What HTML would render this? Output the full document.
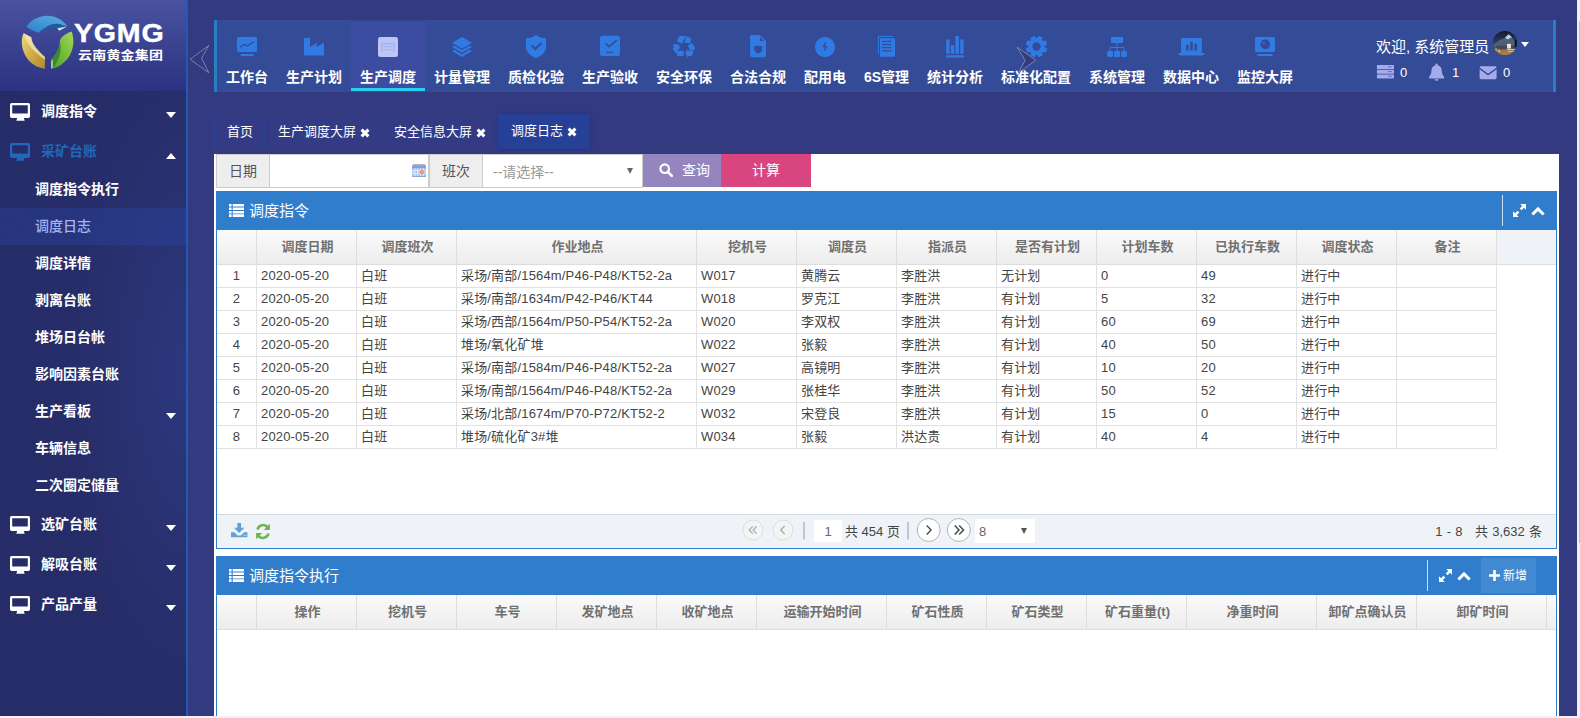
<!DOCTYPE html>
<html lang="zh-CN">
<head>
<meta charset="utf-8">
<title>调度日志</title>
<style>
*{box-sizing:border-box;margin:0;padding:0}
html,body{width:1580px;height:718px;overflow:hidden}
body{position:relative;background:#343a80;font-family:"Liberation Sans","Noto Sans CJK SC",sans-serif;font-size:13px;color:#444}
.abs{position:absolute}
svg{display:block}
/* fake browser scrollbars (cut off at the edge of the capture) */
#vsb{left:1577px;top:0;width:3px;height:718px;background:#f1f1f1}
#vsb i{position:absolute;left:2px;top:21px;width:1px;height:522px;background:#c1c1c1}
#hsb{left:0;top:716px;width:1580px;height:2px;background:#f1f1f1}
/* sidebar */
#side{left:0;top:0;width:188px;height:716px;background:radial-gradient(ellipse 120px 330px at 100% 52%,rgba(58,80,175,.30),rgba(58,80,175,0) 100%),repeating-linear-gradient(118deg,rgba(255,255,255,0) 0 5px,rgba(120,140,220,.025) 5px 6px),#262c67;border-right:2px solid #1f5bb0;overflow:hidden}
#logo{left:0;top:0;width:186px;height:91px;background:linear-gradient(#4a53a1,#2b3381)}
#ygmg{left:74px;top:18px;font:bold 26px/30px "Liberation Sans",sans-serif;color:#fff;letter-spacing:.7px;white-space:nowrap;-webkit-text-stroke:.4px #fff;transform:scaleX(1.1);transform-origin:0 0}
#ygcn{left:78px;top:46.400px;font:bold 14px/20px "Liberation Sans","Noto Sans CJK SC",sans-serif;color:#fff;letter-spacing:.2px;white-space:nowrap;transform:scaleY(.88);transform-origin:0 50%}
.m1{left:0;width:186px;height:40px;color:#fff;font-weight:bold;font-size:14px;line-height:40px}
.m1 span{position:absolute;left:41px;top:0;white-space:nowrap}
.m1 svg.mon{position:absolute;left:10px;top:12px}
.m1 b{position:absolute;left:166px;width:0;height:0;border-left:5px solid transparent;border-right:5px solid transparent}
.m1 b.dn{top:21px;border-top:6px solid #fff}
.m1 b.up{top:22px;border-bottom:6px solid #fff}
.m1.act{color:#1f68bb}
.m2{left:0;width:186px;height:37px;color:#fff;font-weight:bold;font-size:14px;line-height:37px}
.m2 span{position:absolute;left:35px;top:0;white-space:nowrap}
.m2 b{position:absolute;left:166px;top:20px;width:0;height:0;border-left:5px solid transparent;border-right:5px solid transparent;border-top:6px solid #fff}
.m2.act{background:rgba(40,82,200,.24);color:#a9b3ee;font-weight:500}
/* top nav */
#nav{left:214px;top:20px;width:1342px;height:72px;background:#344b97;border-left:3px solid #2a7fc2;border-right:3px solid #2a7fc2}
.ni{top:20px;height:72px;color:#fff;font-weight:bold;font-size:14px;text-align:center}
.ni span{position:absolute;left:0;right:0;top:46px;line-height:22px;white-space:nowrap}
.ni svg{position:absolute}
.ni.act{top:22px;height:69px;background:#3c4ca0;border-bottom:3px solid #25d0ee}
.ni.act span{top:44px}
/* user box */
#uname{left:1376px;top:36px;font-size:15px;line-height:22px;color:#fff;white-space:nowrap}
#avatar{left:1493px;top:31px;width:24px;height:24px;border-radius:50%;overflow:hidden;background:#2a3550}
#ucaret{left:1521px;top:42px;width:0;height:0;border-left:4px solid transparent;border-right:4px solid transparent;border-top:5px solid #fff}
.ucnt{top:64px;font-size:13px;line-height:18px;color:#fff}
/* page tabs */
.tab{top:115px;height:35px;border:1px solid #2b4193;border-left:0;background:#333b84;color:#fff;font-size:13px;line-height:31px;white-space:nowrap}
.tab span{position:absolute;top:0}
.tab svg{position:absolute}
.tab.act{top:114px;height:35px;background:#254096;border-color:#254096;box-shadow:0 0 5px rgba(0,0,20,.2)}
/* content */
#content{left:214px;top:154px;width:1345px;height:562px;background:#fff}
.lbl{top:154px;height:34px;background:#eee;border:1px solid #ccc;font-size:14px;line-height:32px;color:#555;text-align:center}
.inp{top:154px;height:34px;background:#fff;border:1px solid #ccc;border-left:0}
.btn{top:154px;height:33px;color:#fff;font-size:14px;line-height:32px}
/* panels */
.ph{left:216px;width:1341px;height:39px;background:#307dcc;color:#fff}
.ph .t{position:absolute;left:33px;top:0;font-size:15px;line-height:40px;white-space:nowrap}
.ph svg{position:absolute}
.ph .sep{position:absolute;top:4px;width:1px;height:31px;background:rgba(255,255,255,.75)}
.pb{left:216px;width:1341px;border:1px solid #307dcc;border-top:0;background:#fff;overflow:hidden}
.hr{position:absolute;left:0;top:0;height:35px;width:1339px;background:#eff3f8;border-bottom:1px solid #ddd}
.th{position:absolute;top:0;height:34px;border-right:1px solid #dedede;background:linear-gradient(#fafafa,#ededed);color:#707070;font-weight:bold;font-size:13px;line-height:33px;text-align:center;white-space:nowrap;overflow:hidden;padding-left:2px}
.td{position:absolute;height:23px;border-right:1px solid #e1e1e1;border-bottom:1px solid #e1e1e1;font-size:13px;line-height:21px;color:#444;padding-left:4px;white-space:nowrap;overflow:hidden;letter-spacing:.17px}
.td.n{text-align:center;padding-left:0}
#pager{position:absolute;left:0;top:284px;width:1339px;height:34px;background:#eff3f8;border-top:1px solid #d3dbe5}
</style>
</head>
<body>
<div id="side" class="abs">
  <div id="logo" class="abs">
    <svg class="abs" style="left:0;top:0" width="186" height="91" viewBox="0 0 186 91">
      <defs>
        <linearGradient id="lgB" x1="0" y1="1" x2="1" y2="0"><stop offset="0" stop-color="#2a7fc8"/><stop offset=".6" stop-color="#4a9bd9"/><stop offset="1" stop-color="#5aa8df"/></linearGradient>
        <linearGradient id="lgY" x1="0" y1="0" x2="1" y2="1"><stop offset="0" stop-color="#ecd98a"/><stop offset=".5" stop-color="#cfae4a"/><stop offset="1" stop-color="#b08a2c"/></linearGradient>
        <linearGradient id="lgG" x1="1" y1="0" x2="0" y2="1"><stop offset="0" stop-color="#a6d85e"/><stop offset=".55" stop-color="#72b83a"/><stop offset="1" stop-color="#4f9e30"/></linearGradient>
      </defs>
      <g id="mark"><g transform="translate(15 10) scale(.09057)">
<path d="M125 185C170 110 270 62 360 63C450 64 530 110 578 180L520 168C470 140 400 150 340 195C310 215 285 235 265 250C215 240 165 215 125 185Z" fill="url(#lgB)"/>
<path d="M265 250C300 215 360 165 440 155C480 150 510 158 530 170L578 180L485 228C450 195 380 175 265 250Z" fill="#1d5c9c"/>
<path d="M468 202L575 182L488 229Z" fill="#d3e3f0"/>
<path d="M95 258C60 330 70 440 130 530C180 600 260 640 330 648L330 520C290 480 230 430 200 380C185 350 180 320 180 300Z" fill="url(#lgY)"/>
<path d="M95 258L180 300C185 350 215 410 330 520L330 548C240 480 130 400 95 258Z" fill="#f5e9ae" opacity=".75"/>
<path d="M625 238C660 330 650 440 590 525C540 595 470 640 400 648L400 545C450 500 490 430 495 350C497 310 540 270 625 238Z" fill="url(#lgG)"/>
<path d="M400 648L400 545C450 500 490 430 495 350C512 400 506 480 470 560C450 605 425 635 400 648Z" fill="#3d8a2e"/>
<path d="M400 560L416 546L416 638L400 648Z" fill="#d2e8bd" opacity=".9"/>
</g>
</g>
    </svg>
    <div id="ygmg" class="abs">YGMG</div>
    <div id="ygcn" class="abs">云南黄金集团</div>
  </div>
  <div class="abs m1" style="top:91px"><svg class="mon" width="20" height="18" viewBox="0 0 20 18"><path fill="#fff" fill-rule="evenodd" d="M1.6 0h16.800a1.600 1.600 0 0 1 1.600 1.600v11.700a1.600 1.600 0 0 1-1.600 1.600h-4.600l.9 2.800H6.300l.9-2.800H1.600A1.600 1.600 0 0 1 0 13.300V1.600A1.600 1.600 0 0 1 1.600 0zM2.200 2.300v8.200h15.600V2.300z"/></svg><span>调度指令</span><b class="dn"></b></div>
  <div class="abs m1 act" style="top:131px"><svg class="mon" width="20" height="18" viewBox="0 0 20 18"><path fill="#1f68bb" fill-rule="evenodd" d="M1.6 0h16.800a1.600 1.600 0 0 1 1.600 1.600v11.700a1.600 1.600 0 0 1-1.600 1.600h-4.600l.9 2.800H6.300l.9-2.800H1.600A1.600 1.600 0 0 1 0 13.300V1.600A1.600 1.600 0 0 1 1.600 0zM2.200 2.300v8.200h15.600V2.300z"/></svg><span>采矿台账</span><b class="up"></b></div>
  <div class="abs m2" style="top:171px"><span>调度指令执行</span></div>
  <div class="abs m2 act" style="top:208px"><span>调度日志</span></div>
  <div class="abs m2" style="top:245px"><span>调度详情</span></div>
  <div class="abs m2" style="top:282px"><span>剥离台账</span></div>
  <div class="abs m2" style="top:319px"><span>堆场日台帐</span></div>
  <div class="abs m2" style="top:356px"><span>影响因素台账</span></div>
  <div class="abs m2" style="top:393px"><span>生产看板</span><b></b></div>
  <div class="abs m2" style="top:430px"><span>车辆信息</span></div>
  <div class="abs m2" style="top:467px"><span>二次圈定储量</span></div>
  <div class="abs m1" style="top:504px"><svg class="mon" width="20" height="18" viewBox="0 0 20 18"><path fill="#fff" fill-rule="evenodd" d="M1.6 0h16.800a1.600 1.600 0 0 1 1.600 1.600v11.700a1.600 1.600 0 0 1-1.600 1.600h-4.600l.9 2.800H6.300l.9-2.800H1.600A1.600 1.600 0 0 1 0 13.300V1.600A1.600 1.600 0 0 1 1.600 0zM2.200 2.300v8.200h15.600V2.300z"/></svg><span>选矿台账</span><b class="dn"></b></div>
  <div class="abs m1" style="top:544px"><svg class="mon" width="20" height="18" viewBox="0 0 20 18"><path fill="#fff" fill-rule="evenodd" d="M1.6 0h16.800a1.600 1.600 0 0 1 1.600 1.600v11.700a1.600 1.600 0 0 1-1.600 1.600h-4.600l.9 2.800H6.300l.9-2.800H1.600A1.600 1.600 0 0 1 0 13.300V1.600A1.600 1.600 0 0 1 1.600 0zM2.200 2.300v8.200h15.600V2.300z"/></svg><span>解吸台账</span><b class="dn"></b></div>
  <div class="abs m1" style="top:584px"><svg class="mon" width="20" height="18" viewBox="0 0 20 18"><path fill="#fff" fill-rule="evenodd" d="M1.6 0h16.800a1.600 1.600 0 0 1 1.600 1.600v11.700a1.600 1.600 0 0 1-1.600 1.600h-4.600l.9 2.800H6.300l.9-2.800H1.600A1.600 1.600 0 0 1 0 13.300V1.600A1.600 1.600 0 0 1 1.600 0zM2.200 2.300v8.200h15.600V2.300z"/></svg><span>产品产量</span><b class="dn"></b></div>
</div>
<svg class="abs" style="left:188px;top:40px" width="24" height="40" viewBox="188 40 24 40"><path d="M190.300 59.400L208.800 45.300L201.600 58.200L208.800 72.800Z" fill="none" stroke="#8c91b4" stroke-width="1" stroke-dasharray="2.200 .5"/></svg>
<div id="nav" class="abs"></div>
<div class="abs ni" style="left:217px;width:60px"><span>工作台</span></div>
<div class="abs ni" style="left:277px;width:74px"><span>生产计划</span></div>
<div class="abs ni act" style="left:351px;width:74px"><span>生产调度</span></div>
<div class="abs ni" style="left:425px;width:74px"><span>计量管理</span></div>
<div class="abs ni" style="left:499px;width:74px"><span>质检化验</span></div>
<div class="abs ni" style="left:573px;width:74px"><span>生产验收</span></div>
<div class="abs ni" style="left:647px;width:74px"><span>安全环保</span></div>
<div class="abs ni" style="left:721px;width:74px"><span>合法合规</span></div>
<div class="abs ni" style="left:795px;width:60px"><span>配用电</span></div>
<div class="abs ni" style="left:855px;width:63px"><span>6S管理</span></div>
<div class="abs ni" style="left:918px;width:74px"><span>统计分析</span></div>
<div class="abs ni" style="left:992px;width:88px"><span>标准化配置</span></div>
<div class="abs ni" style="left:1080px;width:74px"><span>系统管理</span></div>
<div class="abs ni" style="left:1154px;width:74px"><span>数据中心</span></div>
<div class="abs ni" style="left:1228px;width:74px"><span>监控大屏</span></div>
<svg id="navicons" class="abs" style="left:0;top:0;pointer-events:none" width="1580" height="100" viewBox="0 0 1580 100" fill="#307be3">
<!-- right scroll arrow (sits over the gear icon) -->
<path d="M1017.200 47.200L1035.800 60.200L1018.600 72.400L1025.200 60.400Z" fill="#343a80" stroke="#8c91b4" stroke-width=".8"/>
<!-- 1 workbench: monitor + chart -->
<rect x="237" y="37" width="20" height="15" rx="1.600"/>
<rect x="240.600" y="54" width="12.800" height="2" rx=".6"/>
<path d="M240.200 47.300L243.900 44.500L247.200 45.800L253.700 42" fill="none" stroke="#344b97" stroke-width="1.400" stroke-linecap="round" stroke-linejoin="round"/>
<!-- 2 factory -->
<path d="M304.600 37.900h4.800a.6 .6 0 0 1 .6 .6v8.600l6.800-4.300v4.300l6.800-4.300a.3 .3 0 0 1 .4 .3v11.700a.6 .6 0 0 1-.6 .6h-18.800a.6 .6 0 0 1-.6-.6v-16.300a.6 .6 0 0 1 .6-.6z"/>
<!-- 3 dispatch (active) -->
<rect x="378" y="37" width="20" height="20" rx="2.200" fill="#bcc5f6"/>
<g fill="none" stroke="#a3adf0" stroke-width="1.100" stroke-linecap="round">
<path d="M384 43.600h8M384 46.700h8M384 49.800h8"/>
<path d="M382.300 42.200q-1.500 4.600 0 9.200M393.700 42.200q1.500 4.600 0 9.200"/>
</g>
<!-- 4 layers -->
<path d="M462 36.900l10 5.900l-10 5.900l-10-5.900z"/>
<path d="M452 46.900l2.300-1.300l7.700 4.500l7.700-4.500l2.300 1.300l-10 5.900z"/>
<path d="M452 51l2.300-1.300l7.700 4.500l7.700-4.500l2.300 1.300l-10 5.900z"/>
<!-- 5 shield check -->
<path d="M536 34.800c-3 2.600-6.600 3.400-10.100 3.400v8.300c0 6 4.800 9.500 10.100 11.600c5.300-2.100 10.100-5.600 10.100-11.600v-8.300c-3.500 0-7.100-.8-10.100-3.400z"/>
<path d="M531.700 45.500L535.300 49L541.500 42.900" fill="none" stroke="#344b97" stroke-width="2"/>
<!-- 6 check square -->
<rect x="600" y="35.700" width="20" height="20.300" rx="2.600"/>
<path d="M605.300 43.400L609 46.700L616.900 40.200" fill="none" stroke="#344b97" stroke-width="1.700"/>
<path d="M606.200 52.400h6.700" fill="none" stroke="#344b97" stroke-width="1.300"/>
<!-- 7 recycle -->
<g transform="translate(664 30) scale(.04454)">
<path d="M348 133H492L402 312L288 250Z"/>
<path d="M492 150H548L612 190L590 292H455L482 228Z"/>
<path d="M628 292L702 405L668 455H582L535 350Z"/>
<path d="M478 522L522 428L532 465H672L622 582H545L532 622Z"/>
<path d="M305 468H442V585H305L285 528Z"/>
<path d="M203 320H322L362 410L330 422L265 532L200 422L218 380Z"/>
</g>
<!-- 8 file + shield -->
<path d="M751.600 34.900h8.200l6.200 6.200v14.500a1.600 1.600 0 0 1-1.600 1.600h-12.700a1.600 1.600 0 0 1-1.600-1.600v-19.100a1.600 1.600 0 0 1 1.600-1.600z"/>
<path d="M760 37v4h4z" fill="#344b97"/>
<path d="M754.200 46.200q4 .2 4-1.200q0 1.400 4 1.200v2.600q0 3.300-4 4.700q-4-1.400-4-4.700z" fill="#344b97"/>
<!-- 9 bolt circle -->
<circle cx="825" cy="47.100" r="10.100"/>
<path d="M825.400 41.700l-3 5.600h2.500l-1.100 5l3.700-6.300h-2.600l1.500-4.300z" fill="#344b97"/>
<!-- 10 docs -->
<path d="M878.400 54V36.400H893" fill="none" stroke="#307be3" stroke-width="1"/>
<rect x="880" y="38.200" width="15" height="18.600" rx=".5"/>
<path d="M881.900 41.300h9.600M881.900 44.500h9.600M881.900 47.700h9.600M881.900 50.900h9.600" fill="none" stroke="#344b97" stroke-width="1.300"/>
<!-- 11 bars -->
<path d="M946.200 39.600h3.400v14.100h-3.400zM950.900 45h3.300v8.700h-3.300zM955.400 36h3.500v17.700h-3.500zM960.200 39.600h3.400v14.100h-3.400zM946 55.200h18.100v2.400H946z"/>
<!-- 12 gear -->
<g transform="translate(1036.500 46.500) rotate(22.500)">
<rect x="-2.500" y="-10.700" width="5" height="5" rx="1" transform="rotate(0)"/><rect x="-2.500" y="-10.700" width="5" height="5" rx="1" transform="rotate(45)"/><rect x="-2.500" y="-10.700" width="5" height="5" rx="1" transform="rotate(90)"/><rect x="-2.500" y="-10.700" width="5" height="5" rx="1" transform="rotate(135)"/><rect x="-2.500" y="-10.700" width="5" height="5" rx="1" transform="rotate(180)"/><rect x="-2.500" y="-10.700" width="5" height="5" rx="1" transform="rotate(225)"/><rect x="-2.500" y="-10.700" width="5" height="5" rx="1" transform="rotate(270)"/><rect x="-2.500" y="-10.700" width="5" height="5" rx="1" transform="rotate(315)"/>
<circle r="6.300" fill="none" stroke="#307be3" stroke-width="4.200"/>
</g>
<!-- 13 sitemap -->
<rect x="1111" y="37" width="12.200" height="6" rx="1"/>
<path d="M1117 43v4M1110 51v-3.500h14v3.500M1117 47v4" fill="none" stroke="#307be3" stroke-width="1"/>
<rect x="1107" y="51" width="6" height="6" rx="1.200"/><rect x="1114" y="51" width="6" height="6" rx="1.200"/><rect x="1121" y="51" width="6" height="6" rx="1.200"/>
<!-- 14 laptop bars -->
<path d="M1182.200 38h18.500a1.200 1.200 0 0 1 1.200 1.200v13.700h2.700q.4 0 .2 .5q-.5 2-2.400 2h-21.900q-1.900 0-2.400-2q-.2-.5 .2-.5h2.700v-13.700a1.200 1.200 0 0 1 1.200-1.200z"/>
<path d="M1186 45h2.600v5.600h-2.600zM1190.200 42h2.600v8.600h-2.600zM1194.400 43.800h2.600v6.800h-2.600z" fill="#344b97"/>
<!-- 15 monitor lens -->
<rect x="1255" y="37" width="20" height="15" rx="1.600"/>
<rect x="1257.200" y="54" width="15.400" height="1.900" rx=".6"/>
<circle cx="1265.200" cy="44.400" r="4.800" fill="#344b97"/>
<circle cx="1263.700" cy="43" r="1.100" fill="#307be3"/>
<!-- user: server, bell, envelope -->
<g fill="#a4aaeb">
<path d="M1377.600 65h15.700q.7 0 .7 .7v2.700q0 .7-.7 .7h-15.700q-.7 0-.7-.7v-2.700q0-.7 .7-.7zM1377.600 69.700h15.700q.7 0 .7 .7v2.700q0 .7-.7 .7h-15.700q-.7 0-.7-.7v-2.700q0-.7 .7-.7zM1377.600 74.400h15.700q.7 0 .7 .7v2.700q0 .7-.7 .7h-15.700q-.7 0-.7-.7v-2.700q0-.7 .7-.7z"/>
<path d="M1436.600 63.600q1.100 0 1.100 1.100v.5q4.100 1 4.100 5.800q0 4 2 5.600q.8.800.3 1.400q-.3.500-1.100.5h-12.800q-.8 0-1.100-.5q-.5-.6.300-1.400q2-1.600 2-5.600q0-4.800 4.100-5.800v-.5q0-1.100 1.100-1.100zM1434.500 79.200h4.200q-.3 1.500-2.100 1.500t-2.100-1.500z"/>
<path d="M1481 66.200h14.200q1.400 0 1.400 1.200l-8.500 6.300l-8.500-6.300q0-1.200 1.400-1.200zM1479.600 69.300l8.500 6.200l8.500-6.200v8.500q0 1.400-1.400 1.400H1481q-1.400 0-1.400-1.400z"/>
</g>
<path d="M1388 66.900h3.800M1388 71.600h3.800M1388 76.300h3.800" stroke="#5a68b8" stroke-width=".9" fill="none"/>

</svg>
<div id="uname" class="abs">欢迎, 系统管理员</div>
<div id="avatar" class="abs"><svg width="24" height="24" viewBox="170 120 476 486" preserveAspectRatio="none">
<defs><linearGradient id="avbg" x1="0" y1="0" x2="0" y2="1"><stop offset="0" stop-color="#121a33"/><stop offset=".45" stop-color="#2b3a58"/><stop offset=".7" stop-color="#4a5468"/><stop offset="1" stop-color="#a57a38"/></linearGradient></defs>
<rect x="170" y="120" width="476" height="486" fill="url(#avbg)"/>
<path d="M180 400L300 300L410 262L482 188L560 268L610 330L620 450L180 450Z" fill="#4c607e"/>
<path d="M405 258L482 186L548 252L500 262L470 290Z" fill="#c3ced9"/>
<path d="M230 420H620V470H230Z" fill="#3b4860"/>
<rect x="448" y="380" width="78" height="95" fill="#f6e3cc"/>
<rect x="600" y="300" width="46" height="150" fill="#0d1326"/>
<ellipse cx="345" cy="455" rx="28" ry="30" fill="#6b3b2a"/>
<path d="M190 500H640V606H190Z" fill="#b98a44" opacity=".6"/>
<path d="M450 485H600V505H450ZM470 525H590V540H470Z" fill="#f0e2c0" opacity=".8"/>
<path d="M215 470h30v60h-30zM270 500h40v50h-40z" fill="#e8c98a" opacity=".7"/>
</svg></div>
<div id="ucaret" class="abs"></div>
<div class="abs ucnt" style="left:1400px">0</div>
<div class="abs ucnt" style="left:1452px">1</div>
<div class="abs ucnt" style="left:1503px">0</div>
<div id="content" class="abs"></div>
<div class="abs tab" style="left:214px;width:51px;border-left:1px solid #2b4193"><span style="left:12px">首页</span></div>
<div class="abs tab" style="left:265px;width:117px"><span style="left:13px">生产调度大屏</span><svg style="left:95px;top:11px;margin-top:.5px" width="10" height="10" viewBox="0 0 10 10"><path d="M1.600 1.600L8.400 8.400M8.400 1.600L1.600 8.400" stroke="#fff" stroke-width="3" stroke-linecap="butt"/></svg></div>
<div class="abs tab" style="left:382px;width:116px"><span style="left:12px">安全信息大屏</span><svg style="left:94px;top:11px;margin-top:.5px" width="10" height="10" viewBox="0 0 10 10"><path d="M1.600 1.600L8.400 8.400M8.400 1.600L1.600 8.400" stroke="#fff" stroke-width="3" stroke-linecap="butt"/></svg></div>
<div class="abs tab act" style="left:498px;width:92px"><span style="left:13px">调度日志</span><svg style="left:69px;top:11px;margin-top:.5px" width="10" height="10" viewBox="0 0 10 10"><path d="M1.600 1.600L8.400 8.400M8.400 1.600L1.600 8.400" stroke="#fff" stroke-width="3" stroke-linecap="butt"/></svg></div>
<div class="abs lbl" style="left:216px;width:54px">日期</div>
<div class="abs inp" style="left:270px;width:159px"></div>
<svg class="abs" style="left:412px;top:164px" width="14" height="13" viewBox="0 0 14 13"><rect x="1" y="0" width="12" height="2" fill="#b4b4b4"/><rect x="0" y="1.500" width="14" height="11.500" fill="#a9c1ee"/><rect x="0" y="1.500" width="14" height="2.700" fill="#7d9fe8"/><path d="M0 6.900h14M0 9.500h14M2.900 4.200v8.800M5.700 4.200v8.800M8.500 4.200v8.800M11.300 4.200v8.800" stroke="#dfe8fa" stroke-width="1.100"/><rect x="0" y="12" width="14" height="1" fill="#8fa6cf"/><circle cx="9.900" cy="8.200" r="2.100" fill="#e8845c"/><rect x="9.600" y="7" width=".7" height="2.400" fill="#fbe3d8"/></svg>
<div class="abs lbl" style="left:429px;width:54px">班次</div>
<div class="abs inp" style="left:483px;width:160px"><span style="position:absolute;left:10px;top:2px;font-size:14px;line-height:30px;color:#999">--请选择--</span><i style="position:absolute;left:144px;top:13px;width:0;height:0;border-left:3.500px solid transparent;border-right:3.500px solid transparent;border-top:6px solid #666"></i></div>
<div class="abs btn" style="left:643px;width:78px;background:#9585bf"><svg style="position:absolute;left:16px;top:9px" width="14" height="14" viewBox="0 0 14 14"><circle cx="5.700" cy="5.700" r="4.300" fill="none" stroke="#fff" stroke-width="2.200"/><path d="M8.800 8.800L12.800 12.800" stroke="#fff" stroke-width="2.600" stroke-linecap="round"/></svg><span style="position:absolute;left:39px;top:0">查询</span></div>
<div class="abs btn" style="left:721px;width:90px;background:#d9467f;text-align:center">计算</div>
<div class="abs ph" style="top:191px"><svg style="left:13px;top:13px" width="15" height="13" viewBox="0 0 15 13"><path d="M0 0h2.600v2.600H0zM3.700 0H15v2.600H3.700zM0 3.450h2.600v2.600H0zM3.700 3.450H15v2.600H3.700zM0 6.900h2.600v2.600H0zM3.700 6.900H15v2.600H3.700zM0 10.350h2.600v2.600H0zM3.700 10.350H15v2.600H3.700z" fill="#fff"/></svg><span class="t">调度指令</span><i class="sep" style="left:1286px"></i><svg style="left:1297px;top:13px" width="13" height="13" viewBox="0 0 13 13"><path d="M7.200 0H13V5.800L11 3.800L8.500 6.300L6.700 4.500L9.200 2ZM5.800 13H0V7.200L2 9.200L4.500 6.700L6.300 8.500L3.800 11Z" fill="#fff"/></svg><svg style="left:1315px;top:15px" width="14" height="10" viewBox="0 0 14 10"><path d="M1.400 8.500L7 2.900L12.600 8.500" fill="none" stroke="#fff" stroke-width="3"/></svg></div>
<div class="abs pb" style="top:230px;height:319px">
<div class="hr">
<div class="th" style="left:0px;width:40px"></div>
<div class="th" style="left:40px;width:100px">调度日期</div>
<div class="th" style="left:140px;width:100px">调度班次</div>
<div class="th" style="left:240px;width:240px">作业地点</div>
<div class="th" style="left:480px;width:100px">挖机号</div>
<div class="th" style="left:580px;width:100px">调度员</div>
<div class="th" style="left:680px;width:100px">指派员</div>
<div class="th" style="left:780px;width:100px">是否有计划</div>
<div class="th" style="left:880px;width:100px">计划车数</div>
<div class="th" style="left:980px;width:100px">已执行车数</div>
<div class="th" style="left:1080px;width:100px">调度状态</div>
<div class="th" style="left:1180px;width:100px">备注</div>
</div>
<div class="td n" style="left:0px;top:35px;width:40px">1</div>
<div class="td" style="left:40px;top:35px;width:100px">2020-05-20</div>
<div class="td" style="left:140px;top:35px;width:100px">白班</div>
<div class="td" style="left:240px;top:35px;width:240px">采场/南部/1564m/P46-P48/KT52-2a</div>
<div class="td" style="left:480px;top:35px;width:100px">W017</div>
<div class="td" style="left:580px;top:35px;width:100px">黄腾云</div>
<div class="td" style="left:680px;top:35px;width:100px">李胜洪</div>
<div class="td" style="left:780px;top:35px;width:100px">无计划</div>
<div class="td" style="left:880px;top:35px;width:100px">0</div>
<div class="td" style="left:980px;top:35px;width:100px">49</div>
<div class="td" style="left:1080px;top:35px;width:100px">进行中</div>
<div class="td" style="left:1180px;top:35px;width:100px"></div>
<div class="td n" style="left:0px;top:58px;width:40px">2</div>
<div class="td" style="left:40px;top:58px;width:100px">2020-05-20</div>
<div class="td" style="left:140px;top:58px;width:100px">白班</div>
<div class="td" style="left:240px;top:58px;width:240px">采场/南部/1634m/P42-P46/KT44</div>
<div class="td" style="left:480px;top:58px;width:100px">W018</div>
<div class="td" style="left:580px;top:58px;width:100px">罗克江</div>
<div class="td" style="left:680px;top:58px;width:100px">李胜洪</div>
<div class="td" style="left:780px;top:58px;width:100px">有计划</div>
<div class="td" style="left:880px;top:58px;width:100px">5</div>
<div class="td" style="left:980px;top:58px;width:100px">32</div>
<div class="td" style="left:1080px;top:58px;width:100px">进行中</div>
<div class="td" style="left:1180px;top:58px;width:100px"></div>
<div class="td n" style="left:0px;top:81px;width:40px">3</div>
<div class="td" style="left:40px;top:81px;width:100px">2020-05-20</div>
<div class="td" style="left:140px;top:81px;width:100px">白班</div>
<div class="td" style="left:240px;top:81px;width:240px">采场/西部/1564m/P50-P54/KT52-2a</div>
<div class="td" style="left:480px;top:81px;width:100px">W020</div>
<div class="td" style="left:580px;top:81px;width:100px">李双权</div>
<div class="td" style="left:680px;top:81px;width:100px">李胜洪</div>
<div class="td" style="left:780px;top:81px;width:100px">有计划</div>
<div class="td" style="left:880px;top:81px;width:100px">60</div>
<div class="td" style="left:980px;top:81px;width:100px">69</div>
<div class="td" style="left:1080px;top:81px;width:100px">进行中</div>
<div class="td" style="left:1180px;top:81px;width:100px"></div>
<div class="td n" style="left:0px;top:104px;width:40px">4</div>
<div class="td" style="left:40px;top:104px;width:100px">2020-05-20</div>
<div class="td" style="left:140px;top:104px;width:100px">白班</div>
<div class="td" style="left:240px;top:104px;width:240px">堆场/氧化矿堆</div>
<div class="td" style="left:480px;top:104px;width:100px">W022</div>
<div class="td" style="left:580px;top:104px;width:100px">张毅</div>
<div class="td" style="left:680px;top:104px;width:100px">李胜洪</div>
<div class="td" style="left:780px;top:104px;width:100px">有计划</div>
<div class="td" style="left:880px;top:104px;width:100px">40</div>
<div class="td" style="left:980px;top:104px;width:100px">50</div>
<div class="td" style="left:1080px;top:104px;width:100px">进行中</div>
<div class="td" style="left:1180px;top:104px;width:100px"></div>
<div class="td n" style="left:0px;top:127px;width:40px">5</div>
<div class="td" style="left:40px;top:127px;width:100px">2020-05-20</div>
<div class="td" style="left:140px;top:127px;width:100px">白班</div>
<div class="td" style="left:240px;top:127px;width:240px">采场/南部/1584m/P46-P48/KT52-2a</div>
<div class="td" style="left:480px;top:127px;width:100px">W027</div>
<div class="td" style="left:580px;top:127px;width:100px">高镜明</div>
<div class="td" style="left:680px;top:127px;width:100px">李胜洪</div>
<div class="td" style="left:780px;top:127px;width:100px">有计划</div>
<div class="td" style="left:880px;top:127px;width:100px">10</div>
<div class="td" style="left:980px;top:127px;width:100px">20</div>
<div class="td" style="left:1080px;top:127px;width:100px">进行中</div>
<div class="td" style="left:1180px;top:127px;width:100px"></div>
<div class="td n" style="left:0px;top:150px;width:40px">6</div>
<div class="td" style="left:40px;top:150px;width:100px">2020-05-20</div>
<div class="td" style="left:140px;top:150px;width:100px">白班</div>
<div class="td" style="left:240px;top:150px;width:240px">采场/南部/1564m/P46-P48/KT52-2a</div>
<div class="td" style="left:480px;top:150px;width:100px">W029</div>
<div class="td" style="left:580px;top:150px;width:100px">张桂华</div>
<div class="td" style="left:680px;top:150px;width:100px">李胜洪</div>
<div class="td" style="left:780px;top:150px;width:100px">有计划</div>
<div class="td" style="left:880px;top:150px;width:100px">50</div>
<div class="td" style="left:980px;top:150px;width:100px">52</div>
<div class="td" style="left:1080px;top:150px;width:100px">进行中</div>
<div class="td" style="left:1180px;top:150px;width:100px"></div>
<div class="td n" style="left:0px;top:173px;width:40px">7</div>
<div class="td" style="left:40px;top:173px;width:100px">2020-05-20</div>
<div class="td" style="left:140px;top:173px;width:100px">白班</div>
<div class="td" style="left:240px;top:173px;width:240px">采场/北部/1674m/P70-P72/KT52-2</div>
<div class="td" style="left:480px;top:173px;width:100px">W032</div>
<div class="td" style="left:580px;top:173px;width:100px">宋登良</div>
<div class="td" style="left:680px;top:173px;width:100px">李胜洪</div>
<div class="td" style="left:780px;top:173px;width:100px">有计划</div>
<div class="td" style="left:880px;top:173px;width:100px">15</div>
<div class="td" style="left:980px;top:173px;width:100px">0</div>
<div class="td" style="left:1080px;top:173px;width:100px">进行中</div>
<div class="td" style="left:1180px;top:173px;width:100px"></div>
<div class="td n" style="left:0px;top:196px;width:40px">8</div>
<div class="td" style="left:40px;top:196px;width:100px">2020-05-20</div>
<div class="td" style="left:140px;top:196px;width:100px">白班</div>
<div class="td" style="left:240px;top:196px;width:240px">堆场/硫化矿3#堆</div>
<div class="td" style="left:480px;top:196px;width:100px">W034</div>
<div class="td" style="left:580px;top:196px;width:100px">张毅</div>
<div class="td" style="left:680px;top:196px;width:100px">洪达贵</div>
<div class="td" style="left:780px;top:196px;width:100px">有计划</div>
<div class="td" style="left:880px;top:196px;width:100px">40</div>
<div class="td" style="left:980px;top:196px;width:100px">4</div>
<div class="td" style="left:1080px;top:196px;width:100px">进行中</div>
<div class="td" style="left:1180px;top:196px;width:100px"></div>
<div id="pager">
<svg style="position:absolute;left:13px;top:8px" width="42" height="17" viewBox="0 0 42 17"><path d="M7.300 0h3.800v4.800h3.300L9.200 10L4 4.800h3.300zM1 9.200h3.300l3.300 3.200h3.200l3.300-3.200h3.300v5H1z" fill="#62a0d6"/><path d="M13.600 12.300h1M15.300 12.300h1" stroke="#eff3f8" stroke-width=".9"/><g fill="none" stroke="#70b354" stroke-width="2.600"><path d="M27.500 6.500A5.800 5.800 0 0 1 37.600 4.200"/><path d="M38.500 10.500A5.800 5.800 0 0 1 28.400 12.800"/></g><path d="M39.900 .8v6.100h-6.100zM26.100 16.200v-6.100h6.100z" fill="#70b354"/></svg>
<svg style="position:absolute;left:520px;top:-1px" width="240" height="34" viewBox="0 0 240 34"><circle cx="16" cy="16" r="10" fill="#f4f4f4" stroke="#dddddd" stroke-width="1"/><path d="M15.7 12.300L12.2 16L15.7 19.700M19.6 12.300L16.1 16L19.6 19.700" fill="none" stroke="#a8a8a8" stroke-width="1.200"/><circle cx="46" cy="16" r="10" fill="#f4f4f4" stroke="#dddddd" stroke-width="1"/><path d="M47.6 12L43.8 16L47.6 20" fill="none" stroke="#a8a8a8" stroke-width="1.300"/><path d="M67 8v17.500M171 8v17.500" stroke="#b4bdc6" stroke-width="1.600"/><circle cx="191.7" cy="16" r="11.5" fill="#fff" stroke="#b4b4b4" stroke-width="1"/><path d="M189.7 11.500L194.1 16L189.7 20.500" fill="none" stroke="#4a4a4a" stroke-width="1.350"/><circle cx="221.9" cy="16" r="11.5" fill="#fff" stroke="#b4b4b4" stroke-width="1"/><path d="M217.70000000000002 11.500L222.0 16L217.70000000000002 20.500M222.20000000000002 11.500L226.5 16L222.20000000000002 20.500" fill="none" stroke="#4a4a4a" stroke-width="1.500"/></svg>
<div style="position:absolute;left:597px;top:5px;width:28px;height:22px;background:#fff;text-align:center;font-size:13px;line-height:24px;color:#666">1</div>
<div style="position:absolute;left:628px;top:5px;font-size:13px;line-height:23px;color:#444;white-space:nowrap">共 454 页</div>
<div style="position:absolute;left:758px;top:4px;width:60px;height:24px;background:#fff;font-size:13px;line-height:25px;color:#666"><span style="position:absolute;left:4px">8</span><i style="position:absolute;left:46px;top:9px;width:0;height:0;border-left:3px solid transparent;border-right:3px solid transparent;border-top:6px solid #555"></i></div>
<div style="position:absolute;right:14px;top:5px;font-size:13px;line-height:23px;color:#444;white-space:pre;word-spacing:.6px">1 - 8   共 3,632 条</div>
</div>
</div>
<div class="abs ph" style="top:556px"><svg style="left:13px;top:13px" width="15" height="13" viewBox="0 0 15 13"><path d="M0 0h2.600v2.600H0zM3.700 0H15v2.600H3.700zM0 3.450h2.600v2.600H0zM3.700 3.450H15v2.600H3.700zM0 6.900h2.600v2.600H0zM3.700 6.900H15v2.600H3.700zM0 10.350h2.600v2.600H0zM3.700 10.350H15v2.600H3.700z" fill="#fff"/></svg><span class="t">调度指令执行</span><i class="sep" style="left:1211px"></i><svg style="left:1223px;top:13px" width="13" height="13" viewBox="0 0 13 13"><path d="M7.200 0H13V5.800L11 3.800L8.500 6.300L6.700 4.500L9.200 2ZM5.800 13H0V7.200L2 9.200L4.500 6.700L6.300 8.500L3.800 11Z" fill="#fff"/></svg><svg style="left:1241px;top:15px" width="14" height="10" viewBox="0 0 14 10"><path d="M1.400 8.500L7 2.900L12.600 8.500" fill="none" stroke="#fff" stroke-width="3"/></svg><div style="position:absolute;left:1265px;top:2px;width:55px;height:35px;background:#4189d0;font-size:12px;line-height:36px"><svg style="left:8px;top:12px;position:absolute" width="11" height="11" viewBox="0 0 11 11"><path d="M5.500 0v11M0 5.500h11" stroke="#fff" stroke-width="2.600"/></svg><span style="position:absolute;left:22px;top:0;white-space:nowrap">新增</span></div></div>
<div class="abs pb" style="top:595px;height:130px">
<div class="hr">
<div class="th" style="left:0px;width:40px"></div>
<div class="th" style="left:40px;width:100px">操作</div>
<div class="th" style="left:140px;width:100px">挖机号</div>
<div class="th" style="left:240px;width:100px">车号</div>
<div class="th" style="left:340px;width:100px">发矿地点</div>
<div class="th" style="left:440px;width:100px">收矿地点</div>
<div class="th" style="left:540px;width:130px">运输开始时间</div>
<div class="th" style="left:670px;width:100px">矿石性质</div>
<div class="th" style="left:770px;width:100px">矿石类型</div>
<div class="th" style="left:870px;width:100px">矿石重量(t)</div>
<div class="th" style="left:970px;width:130px">净重时间</div>
<div class="th" style="left:1100px;width:100px">卸矿点确认员</div>
<div class="th" style="left:1200px;width:130px">卸矿时间</div>
<div class="th" style="left:1330px;width:100px"></div>
</div></div>
<div id="vsb" class="abs"><i></i></div>
<div id="hsb" class="abs"></div>
</body>
</html>
